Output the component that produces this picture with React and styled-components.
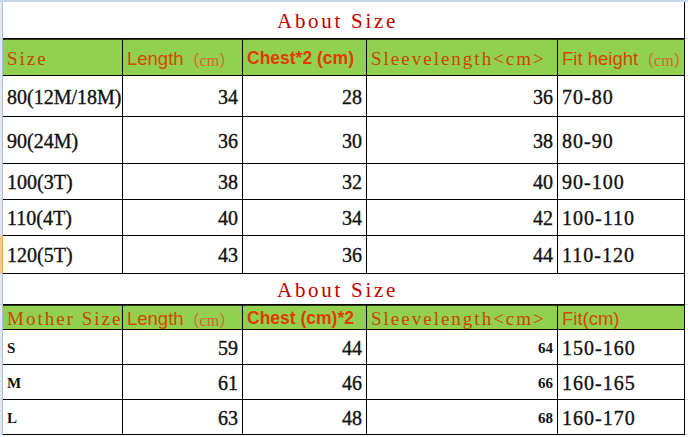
import React from "react";
import styled, { createGlobalStyle } from "styled-components";

const GlobalStyle = createGlobalStyle`
  html, body { margin: 0; padding: 0; background: #fff; }
  body { width: 688px; height: 437px; overflow: hidden; }
  * { box-sizing: border-box; }
`;

const COLS = "3px 120px 120px 124px 191px 127px 4px";
const RED = "#c00000";
const ORANGE = "#d24a00";
const GREEN = "#92d050";
const SERIF = `"Liberation Serif", "Times New Roman", "Noto Sans CJK SC", serif`;

const Sheet = styled.div`
  width: 688px;
  height: 437px;
  display: flex;
  flex-direction: column;
  background: #fff;
  overflow: hidden;
`;

const ColumnBar = styled.div`
  flex: none;
  height: 2px;
  background: #c6d5e7;
`;

const Row = styled.div`
  flex: none;
  display: grid;
  grid-template-columns: ${COLS};
  height: ${(p) => p.$h}px;
`;

const RowHead = styled.div`
  background: ${(p) => (p.$active ? "#f7c98b" : "#e2e9f2")};
  border-right: 1px solid ${(p) => (p.$active ? "#e3a24e" : "#a9bdd3")};
  border-bottom: 1px solid #c3d0df;
`;

const RowTail = styled.div`
  border-bottom: 1px solid #d9d9d9;
`;

const Cell = styled.div`
  min-width: 0;
  display: flex;
  align-items: center;
  justify-content: ${(p) => (p.$align === "right" ? "flex-end" : "flex-start")};
  padding: 2px ${(p) => (p.$align === "right" ? 4 : 0)}px 0 4px;
  overflow: hidden;
  white-space: nowrap;
  background: ${(p) => (p.$head ? GREEN : "#fff")};
  border-right: 1px solid #000;
  border-bottom: 1px solid #000;
  border-top: ${(p) => (p.$head ? "1px solid #2a3a10" : "0")};
`;

const TitleCell = styled(Cell)`
  grid-column: span 5;
  justify-content: center;
  padding: 2px 12px 0 0;
`;

const Title = styled.span`
  font-family: ${SERIF};
  font-size: 21px;
  letter-spacing: 2.7px;
  color: ${RED};
`;

const HeadSerif = styled.span`
  font-family: ${SERIF};
  font-size: 19px;
  letter-spacing: 2px;
  color: #c94700;
`;

const HeadSans = styled.span`
  font-family: "Liberation Sans", Arial, sans-serif;
  font-size: ${(p) => (p.$bold ? 17.5 : 18.5)}px;
  font-weight: ${(p) => (p.$bold ? 700 : 400)};
  color: ${(p) => (p.$bold ? "#e03c00" : ORANGE)};
`;

const Unit = styled.span`
  font-family: ${SERIF};
  font-size: 16px;
  font-weight: 400;
  color: #d8682a;
`;

const Value = styled.span`
  font-family: ${SERIF};
  font-size: ${(p) => (p.$small ? 15 : 20)}px;
  font-weight: ${(p) => (p.$small ? 700 : 400)};
  letter-spacing: ${(p) => (p.$spaced ? 1 : 0)}px;
  -webkit-text-stroke: ${(p) => (p.$small ? 0 : 0.35)}px #111;
  color: #111;
`;

const kids = [
  { h: 41, size: "80(12M/18M)", len: "34", chest: "28", sleeve: "36", fit: "70-80" },
  { h: 47, size: "90(24M)", len: "36", chest: "30", sleeve: "38", fit: "80-90" },
  { h: 36, size: "100(3T)", len: "38", chest: "32", sleeve: "40", fit: "90-100" },
  { h: 36, size: "110(4T)", len: "40", chest: "34", sleeve: "42", fit: "100-110" },
  { h: 38, size: "120(5T)", len: "43", chest: "36", sleeve: "44", fit: "110-120", active: true },
];

const mothers = [
  { h: 35, size: "S", len: "59", chest: "44", sleeve: "64", fit: "150-160" },
  { h: 35, size: "M", len: "61", chest: "46", sleeve: "66", fit: "160-165" },
  { h: 35, size: "L", len: "63", chest: "48", sleeve: "68", fit: "160-170" },
];

function TitleRow({ h }) {
  return (
    <Row $h={h}>
      <RowHead />
      <TitleCell>
        <Title>About Size</Title>
      </TitleCell>
      <RowTail />
    </Row>
  );
}

function DataRow({ r, small }) {
  return (
    <Row $h={r.h}>
      <RowHead $active={r.active} />
      <Cell>
        <Value $small={small}>{r.size}</Value>
      </Cell>
      <Cell $align="right">
        <Value>{r.len}</Value>
      </Cell>
      <Cell $align="right">
        <Value>{r.chest}</Value>
      </Cell>
      <Cell $align="right">
        <Value $small={small}>{r.sleeve}</Value>
      </Cell>
      <Cell>
        <Value $spaced>{r.fit}</Value>
      </Cell>
      <RowTail />
    </Row>
  );
}

export default function App() {
  return (
    <>
      <GlobalStyle />
      <Sheet>
        <ColumnBar />
        <TitleRow h={37} />
        <Row $h={37}>
          <RowHead />
          <Cell $head>
            <HeadSerif>Size</HeadSerif>
          </Cell>
          <Cell $head>
            <HeadSans>Length</HeadSans>
            <Unit>（cm）</Unit>
          </Cell>
          <Cell $head>
            <HeadSans $bold>Chest*2 (cm)</HeadSans>
          </Cell>
          <Cell $head>
            <HeadSerif>Sleevelength&lt;cm&gt;</HeadSerif>
          </Cell>
          <Cell $head>
            <HeadSans>Fit height</HeadSans>
            <Unit>（cm）</Unit>
          </Cell>
          <RowTail />
        </Row>
        {kids.map((r) => (
          <DataRow key={r.size} r={r} />
        ))}
        <TitleRow h={31} />
        <Row $h={25}>
          <RowHead />
          <Cell $head>
            <HeadSerif>Mother Size</HeadSerif>
          </Cell>
          <Cell $head>
            <HeadSans>Length</HeadSans>
            <Unit>（cm）</Unit>
          </Cell>
          <Cell $head>
            <HeadSans $bold>Chest (cm)*2</HeadSans>
          </Cell>
          <Cell $head>
            <HeadSerif>Sleevelength&lt;cm&gt;</HeadSerif>
          </Cell>
          <Cell $head>
            <HeadSans>Fit(cm)</HeadSans>
          </Cell>
          <RowTail />
        </Row>
        {mothers.map((r) => (
          <DataRow key={r.size} r={r} small />
        ))}
      </Sheet>
    </>
  );
}
